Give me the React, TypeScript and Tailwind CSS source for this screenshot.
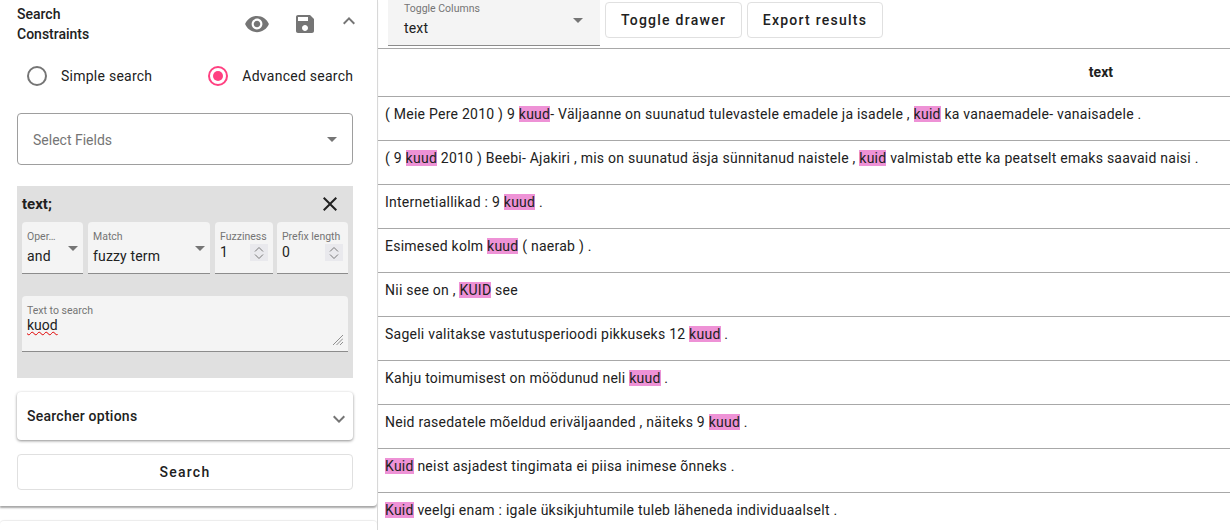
const ROWS: string[][] = [
  ['( Meie Pere 2010 ) 9 ', '*kuud', '- Väljaanne on suunatud tulevastele emadele ja isadele , ', '*kuid', ' ka vanaemadele- vanaisadele .'],
  ['( 9 ', '*kuud', ' 2010 ) Beebi- Ajakiri , mis on suunatud äsja sünnitanud naistele , ', '*kuid', ' valmistab ette ka peatselt emaks saavaid naisi .'],
  ['Internetiallikad : 9 ', '*kuud', ' .'],
  ['Esimesed kolm ', '*kuud', ' ( naerab ) .'],
  ['Nii see on , ', '*KUID', ' see'],
  ['Sageli valitakse vastutusperioodi pikkuseks 12 ', '*kuud', ' .'],
  ['Kahju toimumisest on möödunud neli ', '*kuud', ' .'],
  ['Neid rasedatele mõeldud eriväljaanded , näiteks 9 ', '*kuud', ' .'],
  ['*Kuid', ' neist asjadest tingimata ei piisa inimese õnneks .'],
  ['*Kuid', ' veelgi enam : igale üksikjuhtumile tuleb läheneda individuaalselt .'],
]

function Caret({ className }: { className?: string }) {
  return (
    <svg viewBox="0 0 10 5" className={className} fill="#757575">
      <path d="M0 0l5 5 5-5z" />
    </svg>
  )
}

function Spinner() {
  return (
    <div className="flex h-[17px] w-[18px] flex-col items-center justify-center gap-[2px] bg-[#e9e9ed]">
      <svg viewBox="0 0 10 5" className="h-[5px] w-[10px]" fill="none" stroke="#777" strokeWidth="1">
        <path d="M1 4.5l4-4 4 4" />
      </svg>
      <svg viewBox="0 0 10 5" className="h-[5px] w-[10px]" fill="none" stroke="#777" strokeWidth="1">
        <path d="M1 .5l4 4 4-4" />
      </svg>
    </div>
  )
}

function SelectBox({ label, value, width }: { label: string; value: string; width: string }) {
  return (
    <div className={`relative h-[52px] ${width} rounded-t border-b border-[#8c8c8c] bg-[#f4f4f4] pl-[5px] pt-[8px]`}>
      <p className="text-[10.5px] leading-[13px] text-[#757575]">{label}</p>
      <p className="mt-[4px] text-[14px] leading-[18px] tracking-[0.15px] text-[#212121]">{value}</p>
      <Caret className="absolute right-[5px] top-[24px] h-[5px] w-[10px]" />
    </div>
  )
}

function NumberBox({ label, value, width }: { label: string; value: string; width: string }) {
  return (
    <div className={`relative h-[52px] ${width} rounded-t border-b border-[#8c8c8c] bg-[#f4f4f4] pl-[5px] pt-[8px]`}>
      <p className="whitespace-nowrap text-[10.5px] leading-[13px] text-[#757575]">{label}</p>
      <p className="text-[14px] leading-[18px] tracking-[0.15px] text-[#212121]">{value}</p>
      <div className="absolute right-[5px] top-[22px]">
        <Spinner />
      </div>
    </div>
  )
}

function Sidebar() {
  return (
    <aside className="flex w-[377px] shrink-0 flex-col">
      <div className="h-[506px] rounded-br bg-white pl-[17px] shadow-[0_2px_2px_rgba(0,0,0,0.35)]">
        <div className="flex h-[48px] items-start">
          <h2 className="mt-[4px] w-[100px] shrink-0 text-[14px] font-medium leading-[20px] text-[#212121]">
            Search Constraints
          </h2>
          <svg viewBox="0 0 24 24" className="ml-[127px] mt-[11px] h-[26px] w-[26px]" fill="#757575">
            <path d="M12 4.5C7 4.5 2.73 7.61 1 12c1.73 4.39 6 7.5 11 7.5s9.27-3.11 11-7.5c-1.73-4.39-6-7.5-11-7.5zM12 17c-2.76 0-5-2.24-5-5s2.24-5 5-5 5 2.24 5 5-2.24 5-5 5zm0-8c-1.66 0-3 1.34-3 3s1.34 3 3 3 3-1.34 3-3-1.34-3-3-3z" />
          </svg>
          <svg viewBox="0 0 24 24" className="ml-[23px] mt-[12px] h-[24px] w-[24px]" fill="#757575">
            <path d="M17 3H5c-1.11 0-2 .9-2 2v14c0 1.1.89 2 2 2h14c1.1 0 2-.9 2-2V7l-4-4zm-5 16c-1.66 0-3-1.34-3-3s1.34-3 3-3 3 1.34 3 3-1.34 3-3 3zm3-10H5V5h10v4z" />
          </svg>
          <svg viewBox="0 0 24 24" className="ml-[20px] mt-[9px] h-[24px] w-[24px]" fill="#757575">
            <path d="M12 8l-6 6 1.41 1.41L12 10.83l4.59 4.58L18 14z" />
          </svg>
        </div>

        <div className="mt-[17px] flex h-[22px] items-center text-[14px] tracking-[0.25px] text-[#212121]">
          <span className="ml-[10px] h-[20px] w-[20px] rounded-full border-2 border-[#757575]" />
          <span className="ml-[14px] whitespace-nowrap">Simple search</span>
          <span className="ml-[56px] flex h-[20px] w-[20px] items-center justify-center rounded-full border-2 border-[#ff4081]">
            <span className="h-[10px] w-[10px] rounded-full bg-[#ff4081]" />
          </span>
          <span className="ml-[14px] whitespace-nowrap">Advanced search</span>
        </div>

        <div className="mt-[26px] flex h-[52px] w-[336px] items-center justify-between rounded border border-[#9e9e9e] pl-[15px] pr-[15px] text-[14px] text-[#757575]">
          <span className="mt-[2px]">Select Fields</span>
          <Caret className="h-[5px] w-[10px]" />
        </div>

        <div className="mt-[21px] h-[192px] w-[336px] bg-[#e0e0e0] px-[5px]">
          <div className="flex h-[36px] items-center justify-between pr-[6px]">
            <span className="text-[15px] font-bold text-[#212121]">text;</span>
            <svg viewBox="0 0 24 24" className="h-[24px] w-[24px]" fill="#212121">
              <path d="M19 6.41L17.59 5 12 10.59 6.41 5 5 6.41 10.59 12 5 17.59 6.41 19 12 13.41 17.59 19 19 17.59 13.41 12z" />
            </svg>
          </div>
          <div className="flex gap-[5px]">
            <SelectBox label="Oper…" value="and" width="w-[61px]" />
            <SelectBox label="Match" value="fuzzy term" width="w-[122px]" />
            <NumberBox label="Fuzziness" value="1" width="w-[58px]" />
            <div className="-ml-px">
              <NumberBox label="Prefix length" value="0" width="w-[71px]" />
            </div>
          </div>
          <div className="relative mt-[22px] h-[56px] rounded-t border-b border-[#8c8c8c] bg-[#f4f4f4] pl-[5px] pt-[8px]">
            <p className="text-[10.5px] leading-[13px] text-[#757575]">Text to search</p>
            <p className="text-[14px] leading-[16px] text-[#212121] underline decoration-[#e00000] decoration-wavy decoration-1">
              kuod
            </p>
            <svg viewBox="0 0 10 10" className="absolute bottom-[6px] right-[5px] h-[10px] w-[10px]" stroke="#757575" strokeWidth="0.8">
              <path d="M0 10L10 0M3.5 10L10 3.5M7 10L10 7" />
            </svg>
          </div>
        </div>

        <div className="mt-[14px] flex h-[48px] w-[336px] items-center justify-between rounded bg-white pl-[10px] pr-[2px] shadow-[0_1px_3px_rgba(0,0,0,0.45)]">
          <span className="text-[14px] font-medium tracking-[0.25px] text-[#212121]">Searcher options</span>
          <svg viewBox="0 0 24 24" className="mt-[6px] h-[24px] w-[24px]" fill="#757575">
            <path d="M16.59 8.59L12 13.17 7.41 8.59 6 10l6 6 6-6z" />
          </svg>
        </div>

        <button
          type="button"
          className="mt-[14px] h-[36px] w-[336px] rounded border border-[#e0e0e0] text-[14px] font-medium tracking-[1.25px] text-[#212121]"
        >
          Search
        </button>
      </div>
      <div className="mt-[15px] h-[9px] rounded-t bg-white shadow-[0_-1px_1px_rgba(0,0,0,0.08)]" />
    </aside>
  )
}

function Results() {
  return (
    <main className="min-w-0 flex-1 border-l border-[#d8d8d8]">
      <div className="flex h-[49px] items-start gap-[5px] border-b border-[#a8a8a8] pl-[10px]">
        <div className="relative h-[46px] w-[212px] border-b border-[#8c8c8c] bg-[#f4f4f4] pl-[16px] pt-[3px]">
          <p className="text-[10.5px] leading-[12px] text-[#757575]">Toggle Columns</p>
          <p className="mt-[4px] text-[14px] leading-[18px] tracking-[0.15px] text-[#212121]">text</p>
          <Caret className="absolute right-[17px] top-[18px] h-[5px] w-[10px]" />
        </div>
        <button
          type="button"
          className="mt-[2px] h-[36px] w-[137px] rounded border border-[#e0e0e0] text-[14px] font-medium tracking-[1.25px] text-[#212121]"
        >
          Toggle drawer
        </button>
        <button
          type="button"
          className="mt-[2px] h-[36px] w-[136px] rounded border border-[#e0e0e0] text-[14px] font-medium tracking-[1.25px] text-[#212121]"
        >
          Export results
        </button>
      </div>
      <div className="flex h-[48px] items-center justify-end border-b border-[#a8a8a8] pr-[117px] text-[14px] font-bold text-[#212121]">
        text
      </div>
      {ROWS.map((parts, i) => (
        <div key={i} className="h-[44px] border-b border-[#a8a8a8] pl-[7px] pt-[7px] text-[14px] leading-[20px] tracking-[0.25px] text-[#212121]">
          <p className="whitespace-pre">
            {parts.map((part, j) =>
              part.startsWith('*') ? (
                <span key={j} className="bg-[#ee92d6]">
                  {part.slice(1)}
                </span>
              ) : (
                <span key={j}>{part}</span>
              )
            )}
          </p>
        </div>
      ))}
    </main>
  )
}

export default function App() {
  return (
    <div className="flex h-[530px] w-[1230px] overflow-hidden bg-white font-['Roboto',sans-serif]">
      <Sidebar />
      <Results />
    </div>
  )
}
